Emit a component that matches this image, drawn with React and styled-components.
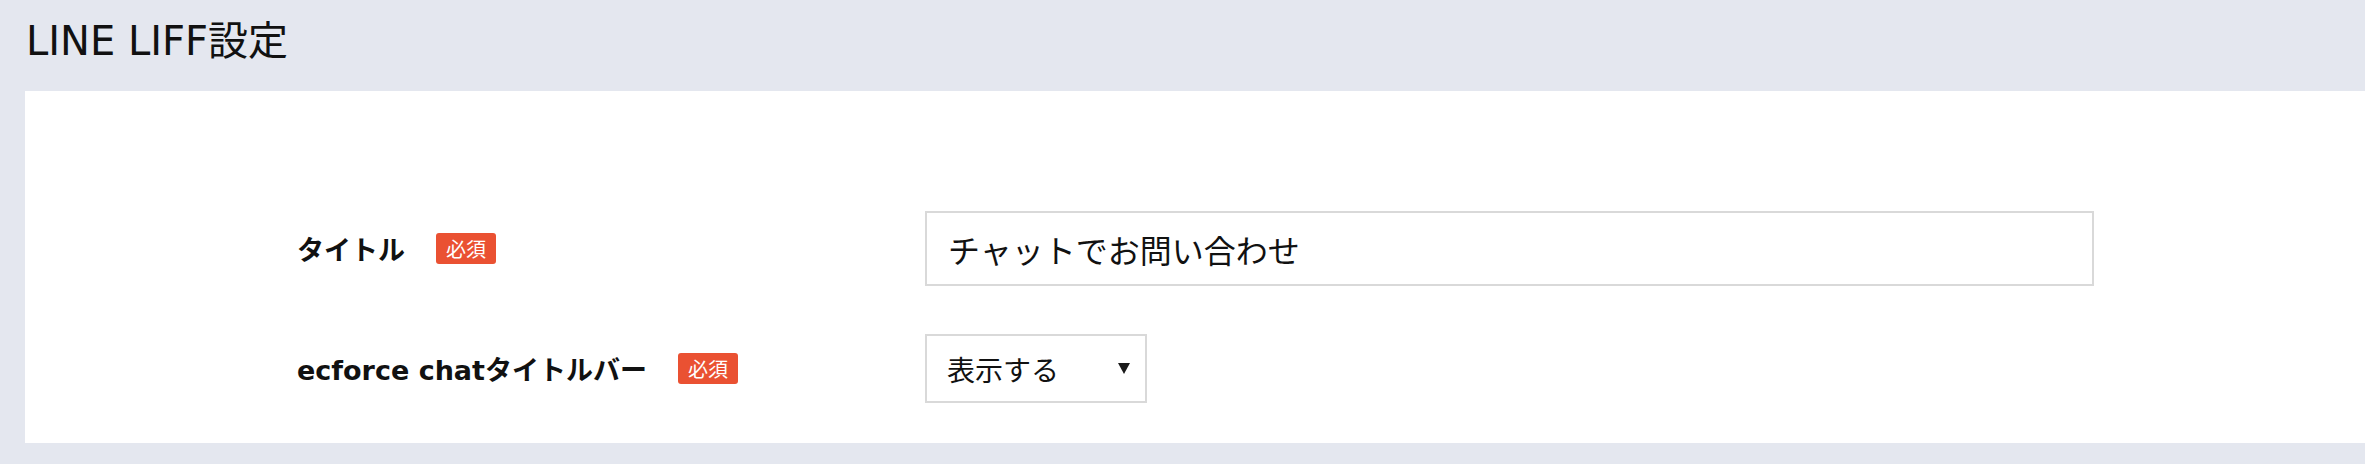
import styled, { createGlobalStyle } from "styled-components";

const GlobalStyle = createGlobalStyle`
  body {
    margin: 0;
    background: #e4e7ef;
    font-family: "DejaVu Sans", "Noto Sans CJK JP", sans-serif;
    color: #111;
  }
`;

const fields = [
  { label: "タイトル", kind: "input", value: "チャットでお問い合わせ" },
  { label: "ecforce chatタイトルバー", kind: "select", value: "表示する" },
];

const App = () => {
  return (
    <Page>
      <GlobalStyle />
      <Header>
        <Title>LINE LIFF設定</Title>
      </Header>
      <Card>
        <Form>
          {fields.map((f) => (
            <Row key={f.label}>
              <LabelCell>
                <Label>{f.label}</Label>
                <Badge>必須</Badge>
              </LabelCell>
              {f.kind === "input" ? (
                <TextBox>{f.value}</TextBox>
              ) : (
                <SelectBox>
                  <span>{f.value}</span>
                  <Arrow viewBox="0 0 12 11">
                    <path d="M0 0 H12 L6 11 Z" fill="#1a1a1a" />
                  </Arrow>
                </SelectBox>
              )}
            </Row>
          ))}
        </Form>
      </Card>
    </Page>
  );
};

const Page = styled.div`
  width: 2365px;
  height: 464px;
  overflow: hidden;
`;

const Header = styled.div`
  height: 91px;
  box-sizing: border-box;
  padding: 21px 0 0 26px;
`;

const Title = styled.h1`
  margin: 0;
  font-size: 40px;
  line-height: 40px;
  font-weight: 400;
  color: #111;
`;

const Card = styled.div`
  margin-left: 25px;
  height: 352px;
  box-sizing: border-box;
  background: #fff;
  padding: 120px 271px 0 272px;
`;

const Form = styled.div`
  display: flex;
  flex-direction: column;
  gap: 48px;
`;

const Row = styled.div`
  display: grid;
  grid-template-columns: 628px 1fr;
  align-items: center;
`;

const LabelCell = styled.div`
  display: flex;
  align-items: center;
  gap: 31px;
`;

const Label = styled.span`
  font-size: 27px;
  font-weight: 700;
  color: #111;
`;

const Badge = styled.span`
  display: inline-flex;
  align-items: center;
  justify-content: center;
  width: 60px;
  height: 31px;
  border-radius: 3px;
  background: #ea5132;
  color: #fff;
  font-family: "Noto Sans CJK JP", sans-serif;
  font-size: 20px;
  line-height: 1;
`;

const TextBox = styled.div`
  height: 75px;
  box-sizing: border-box;
  border: 2px solid #d9d9d9;
  display: flex;
  align-items: center;
  padding-left: 21px;
  font-family: "Noto Sans CJK JP", sans-serif;
  font-size: 32px;
  color: #111;
`;

const SelectBox = styled.div`
  width: 222px;
  height: 69px;
  box-sizing: border-box;
  border: 2px solid #d9d9d9;
  display: flex;
  align-items: center;
  justify-content: space-between;
  padding: 0 15px 0 20px;
  font-family: "Noto Sans CJK JP", sans-serif;
  font-size: 28px;
  color: #111;
`;

const Arrow = styled.svg`
  width: 12px;
  height: 11px;
`;

export default App;
